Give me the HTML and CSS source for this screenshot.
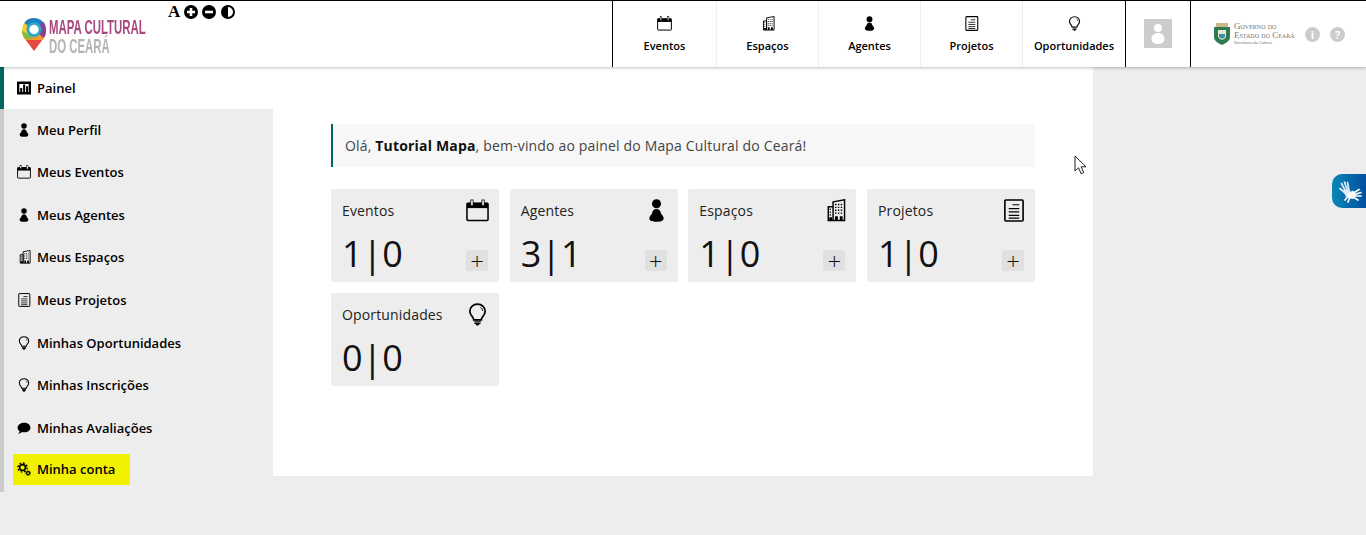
FILE: index.html
```html
<!DOCTYPE html>
<html lang="pt-BR">
<head>
  <meta charset="UTF-8" />
  <title>Painel - Mapa Cultural do Ceará</title>
  <link rel="stylesheet" href="styles.css">
</head>
<body>

  <!-- Icones usados na pagina toda -->
  <svg class="defs" width="0" height="0">
    <symbol id="i-cal" viewBox="0 0 24 24">
      <rect x="1" y="4.500" width="22" height="18" rx="1" fill="none" stroke="currentColor" stroke-width="1.600"/>
      <rect x="1" y="4" width="22" height="5.500" fill="currentColor"/>
      <rect x="5" y="1" width="2.400" height="6" fill="#fff" stroke="currentColor" stroke-width=".8"/>
      <rect x="16.600" y="1" width="2.400" height="6" fill="#fff" stroke="currentColor" stroke-width=".8"/>
    </symbol>
    <symbol id="i-person" viewBox="0 0 24 24">
      <circle cx="12" cy="5" r="4.700"/>
      <path d="M12 10.500c-2.800 0-4 1.800-4.500 4-.4 1.700-3 3-3 5.500 0 2.800 3.200 3.700 7.500 3.700s7.500-.9 7.500-3.700c0-2.500-2.600-3.800-3-5.500-.5-2.200-1.700-4-4.500-4z"/>
    </symbol>
    <symbol id="i-building" viewBox="0 0 24 24">
      <g transform="translate(2 0)">
        <path d="M3.500 8h5v14.500h-5zM8.500 3l12-2.200v21.700h-12z" fill="none" stroke="currentColor" stroke-width="1.500"/>
        <path d="M5 10h1.200v1.500H5zM5 13h1.200v1.500H5zM5 16h1.200v1.500H5zM4.500 19h3v3.500h-3zM10.500 5h1.500v1.500h-1.500zM13.500 5H15v1.500h-1.500zM16.500 5H18v1.500h-1.500zM10.500 8h1.500v1.500h-1.500zM13.500 8H15v1.500h-1.500zM16.500 8H18v1.500h-1.500zM10.500 11h1.500v1.500h-1.500zM13.500 11H15v1.500h-1.500zM16.500 11H18v1.500h-1.500zM10.500 14h1.500v1.500h-1.500zM13.500 14H15v1.500h-1.500zM16.500 14H18v1.500h-1.500zM10.500 18h3v4.500h-3zM15.500 18h3v4.500h-3z"/>
      </g>
    </symbol>
    <symbol id="i-doc" viewBox="0 0 24 24">
      <rect x="3" y="1" width="19" height="22" rx="1" fill="none" stroke="currentColor" stroke-width="1.700"/>
      <path d="M11 6h7M7 10h11M7 13.500h11M7 17h11M7 20h11" fill="none" stroke="currentColor" stroke-width="1.300"/>
    </symbol>
    <symbol id="i-bulb" viewBox="0 0 24 24">
      <path d="M12 1.200c-4.800 0-8 3.400-8 7.400 0 2.800 1.500 4.400 2.800 6 .8 1 1.200 1.800 1.200 3h8c0-1.200.4-2 1.200-3 1.300-1.600 2.800-3.200 2.800-6 0-4-3.200-7.400-8-7.400z" fill="none" stroke="currentColor" stroke-width="1.800"/>
      <path d="M8.500 18.500h7v1h-7zM8.500 20.300h7l-.5 1.500h-6zM10 22h4l-1 1.500h-2z"/>
      <path d="M15 4.500c1.500.8 2.200 2.200 2.200 3.800" fill="none" stroke="currentColor" stroke-width="1"/>
    </symbol>
    <symbol id="i-chart" viewBox="0 0 24 24">
      <path fill-rule="evenodd" d="M0 1h24v22H0zM4 5v14h16V5z"/>
      <path d="M5.500 12h3.500v8H5.500zM10.500 6h3.500v14h-3.500zM15.500 9h3.500v11h-3.500z"/>
    </symbol>
    <symbol id="i-chat" viewBox="0 0 24 24">
      <path d="M13 3C6.500 3 1 6.500 1 11.500c0 2.600 1.500 4.700 3.600 6.100-.3 1.500-1.200 2.700-2.600 3.900 2.800-.2 5.200-1.200 7-2.700 1.300.3 2.600.4 4 .4 6 0 10-3.500 10-7.700S19.500 3 13 3z"/>
    </symbol>
    <symbol id="i-gears" viewBox="0 0 24 24">
      <circle cx="9.500" cy="9.500" r="5" fill="none" stroke="currentColor" stroke-width="2.600"/>
      <circle cx="9.500" cy="9.500" r="7.800" fill="none" stroke="currentColor" stroke-width="2.400" stroke-dasharray="3 3.100"/>
      <circle cx="19" cy="19" r="2.600" fill="none" stroke="currentColor" stroke-width="2"/>
      <circle cx="19" cy="19" r="4.200" fill="none" stroke="currentColor" stroke-width="1.400" stroke-dasharray="2 1.500"/>
    </symbol>
  </svg>

  <header class="topo">
    <div class="marca">
      <a class="logo">
        <svg class="logo-pin" viewBox="0 0 24 34" width="24" height="34">
          <path d="M12 33 3 21h18z" fill="#e8483f"/>
          <path d="M3.400 22C1.300 19.700 0 16.600 0 12.500h24c0 4.100-1.300 7.200-3.400 9.500z" fill="#f29a2e"/>
          <path d="M12 0C5 0 0 5.500 0 12.500c0 2 .4 3.800 1.200 5.500L12 12z" fill="#f2d02e"/>
          <path d="M0 12.500c0 2 .4 3.800 1.200 5.500C3 21 7 22 12 20z" fill="#7cbf45"/>
          <path d="M12 0C8 0 4.500 1.800 2.300 5L12 12l11 2c.6-.8 1-1.500 1-1.500C24 5.500 19 0 12 0z" fill="#1f7fc4"/>
          <path d="M21 3.500C22.900 5.700 24 8.900 24 12.500c0 3-.8 5.500-2.400 7.500L12 12z" fill="#8d3f97"/>
          <circle cx="12" cy="11.500" r="7.500" fill="#2aa7c9"/>
          <circle cx="12" cy="11.500" r="4.700" fill="#fff"/>
        </svg>
        <span class="logo-texto">
          <span class="logo-mapa">MAPA CULTURAL</span>
          <span class="logo-ceara">DO CEARÁ</span>
        </span>
      </a>
      <div class="acessibilidade">
        <span class="fonte-a">A</span>
        <svg viewBox="0 0 14 14" width="14" height="14"><circle cx="7" cy="7" r="7"/><path d="M3 7h8M7 3v8" stroke="#fff" stroke-width="2.600"/></svg>
        <svg viewBox="0 0 14 14" width="14" height="14"><circle cx="7" cy="7" r="7"/><path d="M3 7h8" stroke="#fff" stroke-width="2.600"/></svg>
        <svg viewBox="0 0 14 14" width="14" height="14"><circle cx="7" cy="7" r="6" fill="#fff" stroke="#000" stroke-width="2"/><path d="M7 1a6 6 0 0 0 0 12z"/></svg>
      </div>
    </div>

    <nav class="menu">
      <a class="menu-item"><svg class="menu-icone"><use href="#i-cal"/></svg>Eventos</a>
      <a class="menu-item"><svg class="menu-icone"><use href="#i-building"/></svg>Espaços</a>
      <a class="menu-item"><svg class="menu-icone"><use href="#i-person"/></svg>Agentes</a>
      <a class="menu-item"><svg class="menu-icone"><use href="#i-doc"/></svg>Projetos</a>
      <a class="menu-item"><svg class="menu-icone"><use href="#i-bulb"/></svg>Oportunidades</a>
    </nav>

    <div class="usuario">
      <div class="avatar">
        <svg viewBox="0 0 28 29" width="28" height="29"><circle cx="14" cy="9" r="4" fill="#fff"/><path d="M14 14c-4 0-6.500 2.500-6.500 6s3 5 6.500 5 6.500-1.500 6.500-5-2.500-6-6.500-6z" fill="#fff"/></svg>
      </div>
    </div>

    <div class="governo">
      <svg class="brasao" viewBox="0 0 18 22" width="18" height="22">
        <rect x="3" y="0" width="12" height="4" fill="#c9b98a"/>
        <path d="M1 4h16v10c0 4-4 6-8 8-4-2-8-4-8-8z" fill="#2f7a4f"/>
        <path d="M5 7h8v6c0 2-2 3-4 4-2-1-4-2-4-4z" fill="#e8e8d8"/>
        <path d="M6 11h6v2c0 1.500-1.500 2-3 3-1.500-1-3-1.500-3-3z" fill="#3f8fa8"/>
      </svg>
      <div class="governo-texto">
        <span>Governo do</span>
        <span>Estado do Ceará</span>
        <small>Secretaria da Cultura</small>
      </div>
      <span class="ajuda">i</span>
      <span class="ajuda">?</span>
    </div>
  </header>

  <div class="conteudo">
    <aside class="lateral">
      <a class="lateral-item ativo"><span class="lateral-link"><svg class="lateral-icone"><use href="#i-chart"/></svg>Painel</span></a>
      <a class="lateral-item"><span class="lateral-link"><svg class="lateral-icone"><use href="#i-person"/></svg>Meu Perfil</span></a>
      <a class="lateral-item"><span class="lateral-link"><svg class="lateral-icone"><use href="#i-cal"/></svg>Meus Eventos</span></a>
      <a class="lateral-item"><span class="lateral-link"><svg class="lateral-icone"><use href="#i-person"/></svg>Meus Agentes</span></a>
      <a class="lateral-item"><span class="lateral-link"><svg class="lateral-icone"><use href="#i-building"/></svg>Meus Espaços</span></a>
      <a class="lateral-item"><span class="lateral-link"><svg class="lateral-icone"><use href="#i-doc"/></svg>Meus Projetos</span></a>
      <a class="lateral-item"><span class="lateral-link"><svg class="lateral-icone"><use href="#i-bulb"/></svg>Minhas Oportunidades</span></a>
      <a class="lateral-item"><span class="lateral-link"><svg class="lateral-icone"><use href="#i-bulb"/></svg>Minhas Inscrições</span></a>
      <a class="lateral-item"><span class="lateral-link"><svg class="lateral-icone"><use href="#i-chat"/></svg>Minhas Avaliações</span></a>
      <a class="lateral-item"><span class="lateral-link destaque"><svg class="lateral-icone"><use href="#i-gears"/></svg>Minha conta</span></a>
    </aside>

    <main class="painel">
      <p class="boas-vindas">Olá, <strong>Tutorial Mapa</strong>, bem-vindo ao painel do Mapa Cultural do Ceará!</p>

      <div class="cards">
        <section class="card">
          <div class="card-topo"><h2>Eventos</h2><svg class="card-icone"><use href="#i-cal"/></svg></div>
          <div class="card-base"><span class="numeros">1|0</span><a class="mais">+</a></div>
        </section>
        <section class="card">
          <div class="card-topo"><h2>Agentes</h2><svg class="card-icone"><use href="#i-person"/></svg></div>
          <div class="card-base"><span class="numeros">3|1</span><a class="mais">+</a></div>
        </section>
        <section class="card">
          <div class="card-topo"><h2>Espaços</h2><svg class="card-icone"><use href="#i-building"/></svg></div>
          <div class="card-base"><span class="numeros">1|0</span><a class="mais">+</a></div>
        </section>
        <section class="card">
          <div class="card-topo"><h2>Projetos</h2><svg class="card-icone"><use href="#i-doc"/></svg></div>
          <div class="card-base"><span class="numeros">1|0</span><a class="mais">+</a></div>
        </section>
        <section class="card">
          <div class="card-topo"><h2>Oportunidades</h2><svg class="card-icone"><use href="#i-bulb"/></svg></div>
          <div class="card-base"><span class="numeros">0|0</span></div>
        </section>
      </div>
    </main>
  </div>

  <!-- Ponteiro do mouse que aparece na captura -->
  <svg class="ponteiro" viewBox="0 0 13 20" width="13" height="20">
    <path d="M1 1v15l3.500-3.200 2.700 6 2.600-1.200-2.700-5.800H12z" fill="#fff" stroke="#222" stroke-width="1"/>
  </svg>

  <!-- Botao do VLibras -->
  <a class="vlibras">
    <svg viewBox="0 0 34 34" width="34" height="34" fill="none" stroke-linecap="round">
      <path d="M14 18 9.500 9.500M15.500 17 12.500 8M17 16.500 15.500 8.500M13 19 8 14.500" stroke="#dcecf6" stroke-width="1.700"/>
      <path d="M11 16h7l1 5-5 2z" fill="#dcecf6"/>
      <path d="M20 20 27 15.500M21 21 29 18.500M21 22 29 22M21 23 26 26M16 22 13 26M18 23 16 28" stroke="#fff" stroke-width="1.700"/>
      <path d="M15 19.500l6-3 3 4-3 4.500-5-1z" fill="#fff"/>
    </svg>
  </a>

</body>
</html>
```

FILE: styles.css
```css
* {
  box-sizing: border-box;
}

body {
  margin: 0;
  min-height: 535px;
  font-family: "Open Sans", sans-serif;
  background-color: #ededed;
  color: #000;
  overflow: hidden;
}

.defs {
  position: absolute;
}

/* Topo */

.topo {
  display: flex;
  height: 67px;
  background-color: #fff;
  border-top: 1px solid #000;
  box-shadow: 0 1px 3px rgba(0, 0, 0, 0.25);
  position: relative;
  z-index: 2;
}

.marca {
  display: flex;
  width: 612px;
  align-items: flex-start;
  padding-left: 22px;
}

.logo {
  display: flex;
  gap: 3px;
  margin-top: 17px;
  width: 146px;
  filter: blur(0.3px);
}

.logo-pin {
  flex-shrink: 0;
}

.logo-texto {
  display: flex;
  flex-direction: column;
  align-items: flex-start;
  width: 97px;
  font-family: "Liberation Sans", sans-serif;
  font-weight: bold;
  font-size: 20px;
  line-height: 19px;
}

.logo-mapa,
.logo-ceara {
  white-space: nowrap;
  transform: scaleX(0.57);
  transform-origin: left;
}

.logo-mapa {
  color: #a9487f;
}

.logo-ceara {
  color: #b4b4b4;
}

.acessibilidade {
  display: flex;
  align-items: center;
  gap: 4.5px;
  margin-top: 3px;
}

.fonte-a {
  font-family: "Liberation Serif", serif;
  font-weight: bold;
  font-size: 17px;
  line-height: 16px;
  width: 11px;
}

.menu {
  display: flex;
  height: 66px;
  border-left: 1px solid #000;
  border-right: 1px solid #000;
}

.menu-item {
  display: flex;
  flex-direction: column;
  align-items: center;
  justify-content: flex-start;
  width: 102px;
  padding-top: 15px;
  font-size: 11px;
  font-weight: 600;
  color: #000;
  border-right: 1px solid #eee;
}

.menu-item:first-child {
  width: 104px;
}

.menu-item:last-child {
  border-right: none;
}

.menu-icone {
  width: 15px;
  height: 15px;
  margin-bottom: 7px;
}

.usuario {
  display: flex;
  justify-content: center;
  width: 65px;
  height: 66px;
  padding-top: 18px;
  border-right: 1px solid #000;
}

.avatar {
  width: 28px;
  height: 29px;
  background-color: #ccc;
}

.governo {
  display: flex;
  align-items: center;
  height: 66px;
  padding-left: 22px;
}

.brasao {
  margin-right: 3px;
}

.governo-texto {
  display: flex;
  flex-direction: column;
  width: 71px;
  font-family: "Liberation Serif", serif;
  font-variant: small-caps;
  font-size: 9px;
  line-height: 9px;
  color: #777;
  white-space: nowrap;
}

.governo-texto small {
  font-family: "Liberation Sans", sans-serif;
  font-variant: normal;
  font-size: 4px;
  line-height: 6px;
}

.ajuda {
  display: flex;
  align-items: center;
  justify-content: center;
  width: 15px;
  height: 15px;
  margin-right: 10px;
  border-radius: 50%;
  background-color: #ccc;
  color: #fff;
  font-size: 11px;
  font-weight: 700;
}

/* Lateral */

.conteudo {
  display: flex;
  align-items: flex-start;
}

.lateral {
  width: 273px;
  border-left: 4px solid #ccc;
}

.lateral-item {
  display: flex;
  align-items: center;
  height: 42.56px;
  padding-left: 9px;
}

.lateral-item.ativo {
  height: 42px;
  background-color: #fff;
  margin-left: -4px;
  border-left: 4px solid #00675a;
}

.lateral-link {
  display: flex;
  align-items: center;
  width: 117px;
  height: 31px;
  padding: 0 0 1px 4px;
  font-size: 13px;
  font-weight: 600;
  color: #000;
  white-space: nowrap;
}

.lateral-link.destaque {
  margin-bottom: 2px;
  background-color: #f0f000;
}

.lateral-icone {
  width: 14px;
  height: 14px;
  margin-right: 6px;
  flex-shrink: 0;
}

/* Painel */

.painel {
  width: 820px;
  height: 409px;
  padding: 57px 58px 0;
  background-color: #fff;
}

.boas-vindas {
  margin: 0 0 22px;
  height: 43px;
  padding-left: 12px;
  border-left: 2px solid #00675a;
  background-color: #f7f7f7;
  font-size: 14px;
  letter-spacing: 0.17px;
  line-height: 43px;
  color: #444;
}

.boas-vindas strong {
  color: #111;
}

.cards {
  display: grid;
  grid-template-columns: repeat(4, 1fr);
  column-gap: 10.67px;
  row-gap: 11px;
}

.card {
  height: 93px;
  padding: 10px 10px 0 11px;
  background-color: #ededed;
  border-radius: 2px;
}

.card-topo {
  display: flex;
  justify-content: space-between;
  height: 30px;
}

.card-topo h2 {
  margin: 2px 0 0;
  font-size: 14px;
  font-weight: 400;
  letter-spacing: 0.15px;
  line-height: 20px;
  color: #222;
}

.card-icone {
  width: 23px;
  height: 23px;
}

.card-base {
  display: flex;
  justify-content: space-between;
  align-items: flex-start;
}

.numeros {
  font-size: 36px;
  line-height: 50px;
  color: #111;
}

.mais {
  display: flex;
  align-items: center;
  justify-content: center;
  width: 22px;
  height: 21px;
  margin: 21px 1px 0 0;
  background-color: #e0e0e0;
  border-radius: 2px;
  font-size: 24px;
  font-weight: 300;
  line-height: 21px;
  color: #111;
}

/* Sobrepostos */

.ponteiro {
  position: absolute;
  left: 1074px;
  top: 155px;
}

.vlibras {
  position: absolute;
  right: 0;
  top: 174px;
  width: 34px;
  height: 34px;
  border-radius: 10px 0 0 10px;
  background: linear-gradient(90deg, #0a86b8, #00509f);
}
```
